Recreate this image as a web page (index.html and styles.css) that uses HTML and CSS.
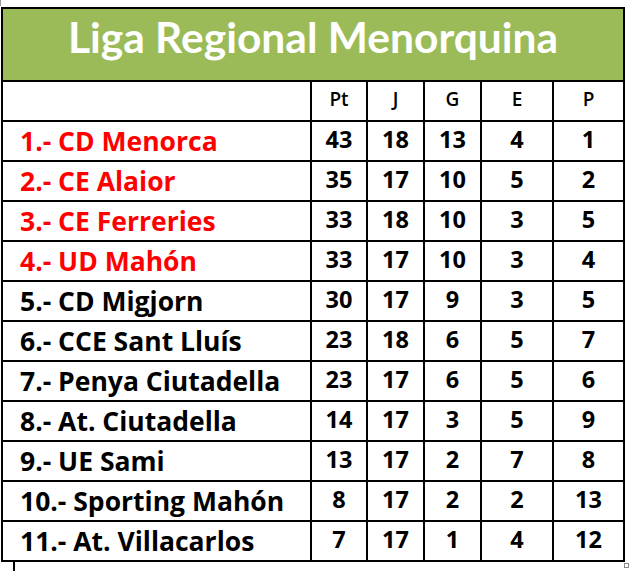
FILE: index.html
```html
<!DOCTYPE html>
<html lang="es">
<head>
<meta charset="utf-8">
<title>Liga Regional Menorquina</title>
<link rel="stylesheet" href="styles.css">
</head>
<body>
<div class="sheet">
  <table class="league">
    <colgroup>
      <col class="c-team"><col class="c-pt"><col class="c-j"><col class="c-g"><col class="c-e"><col class="c-p">
    </colgroup>
    <tr class="title-row"><th colspan="6" class="title">Liga Regional Menorquina</th></tr>
    <tr class="head-row"><th></th><th>Pt</th><th>J</th><th>G</th><th>E</th><th>P</th></tr>
    <tr class="top"><td class="team">1.- CD Menorca</td><td>43</td><td>18</td><td>13</td><td>4</td><td>1</td></tr>
    <tr class="top"><td class="team">2.- CE Alaior</td><td>35</td><td>17</td><td>10</td><td>5</td><td>2</td></tr>
    <tr class="top"><td class="team">3.- CE Ferreries</td><td>33</td><td>18</td><td>10</td><td>3</td><td>5</td></tr>
    <tr class="top"><td class="team">4.- UD Mahón</td><td>33</td><td>17</td><td>10</td><td>3</td><td>4</td></tr>
    <tr><td class="team">5.- CD Migjorn</td><td>30</td><td>17</td><td>9</td><td>3</td><td>5</td></tr>
    <tr><td class="team">6.- CCE Sant Lluís</td><td>23</td><td>18</td><td>6</td><td>5</td><td>7</td></tr>
    <tr><td class="team">7.- Penya Ciutadella</td><td>23</td><td>17</td><td>6</td><td>5</td><td>6</td></tr>
    <tr><td class="team">8.- At. Ciutadella</td><td>14</td><td>17</td><td>3</td><td>5</td><td>9</td></tr>
    <tr><td class="team">9.- UE Sami</td><td>13</td><td>17</td><td>2</td><td>7</td><td>8</td></tr>
    <tr><td class="team">10.- Sporting Mahón</td><td>8</td><td>17</td><td>2</td><td>2</td><td>13</td></tr>
    <tr><td class="team">11.- At. Villacarlos</td><td>7</td><td>17</td><td>1</td><td>4</td><td>12</td></tr>
  </table>
  <span class="cursor"></span>
  <span class="handle"></span>
  <span class="edge"></span>
</div>
</body>
</html>
```

FILE: styles.css
```css
html, body {
  margin: 0;
  padding: 0;
  background: #ffffff;
}

.sheet {
  position: relative;
  width: 632px;
  height: 571px;
  padding: 7px 0 0 1px;
  box-sizing: border-box;
}

.league {
  border-collapse: collapse;
  table-layout: fixed;
  width: 622px;
  font-family: "Open Sans", Lato, "DejaVu Sans", sans-serif;
  color: #000;
}

.c-team { width: 309px; }
.c-pt { width: 56px; }
.c-j { width: 57px; }
.c-g { width: 57px; }
.c-e { width: 72px; }
.c-p { width: 71px; }

.league th,
.league td {
  border: 2px solid #000;
  padding: 0;
  text-align: center;
  vertical-align: middle;
}

.title-row { height: 73px; }

.title {
  background: #9bbb59;
  color: #ffffff;
  font-family: Lato, "Open Sans", sans-serif;
  font-size: 42.5px;
  font-weight: 700;
  line-height: 1;
  padding-bottom: 14px !important;
}

.head-row { height: 40px; }

.head-row th {
  font-size: 19px;
  font-weight: 600;
  padding-bottom: 4px;
}

.league tr:not(.title-row):not(.head-row) { height: 40px; }

.league td {
  font-size: 23.5px;
  font-weight: 700;
  line-height: 1;
  padding-bottom: 2px;
}

.league td.team {
  font-size: 26.5px;
  text-align: left;
  padding-left: 17px;
  padding-bottom: 0;
  white-space: nowrap;
}

.top td.team { color: #ff0000; }

.cursor {
  position: absolute;
  left: 13px;
  top: 562px;
  width: 2px;
  height: 9px;
  background: #000;
}

.handle {
  position: absolute;
  left: 624px;
  top: 563px;
  width: 3px;
  height: 3px;
  border: 1px solid #8a8a8a;
  background: #fff;
}

.edge {
  position: absolute;
  left: 0;
  top: 0;
  width: 1px;
  height: 6px;
  background: #9a9a9a;
}
```
